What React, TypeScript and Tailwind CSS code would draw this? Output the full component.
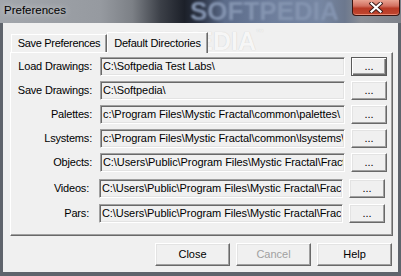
import React from "react";

type Row = {
  label: string;
  value: string;
  mt: number;
  lw: number;
  gap: number;
  tw: number;
  focused?: boolean;
};

const rows: Row[] = [
  { label: "Load Drawings:", value: "C:\\Softpedia Test Labs\\", mt: 0, lw: 81, gap: 8, tw: 245, focused: true },
  { label: "Save Drawings:", value: "C:\\Softpedia\\", mt: 5, lw: 81, gap: 8, tw: 245 },
  { label: "Palettes:", value: "c:\\Program Files\\Mystic Fractal\\common\\palettes\\", mt: 5, lw: 81, gap: 8, tw: 245 },
  { label: "Lsystems:", value: "c:\\Program Files\\Mystic Fractal\\common\\lsystems\\", mt: 5, lw: 81, gap: 8, tw: 245 },
  { label: "Objects:", value: "C:\\Users\\Public\\Program Files\\Mystic Fractal\\Fractal Objects\\", mt: 5, lw: 81, gap: 8, tw: 245 },
  { label: "Videos:", value: "C:\\Users\\Public\\Program Files\\Mystic Fractal\\Fractal Videos\\", mt: 7, lw: 78, gap: 10, tw: 244 },
  { label: "Pars:", value: "C:\\Users\\Public\\Program Files\\Mystic Fractal\\Fractal Pars\\", mt: 6, lw: 78, gap: 10, tw: 244 },
];

function SmallButton({ focused }: { focused?: boolean }) {
  return (
    <div
      className={
        focused
          ? "w-[36px] h-[19px] border border-[#5a5a5a] shadow-[inset_1px_1px_0_#ffffff,inset_-1px_-1px_0_#696969,inset_-2px_-2px_0_#a0a0a0] flex items-center justify-center text-[11px] leading-none pb-[1px]"
          : "w-[36px] h-[19px] border border-t-white border-l-white border-r-[#696969] border-b-[#696969] shadow-[inset_-1px_-1px_0_#a0a0a0,inset_1px_1px_0_#e3e3e3] flex items-center justify-center text-[11px] leading-none pb-[1px]"
      }
    >
      ...
    </div>
  );
}

function BigButton({ label, disabled }: { label: string; disabled?: boolean }) {
  return (
    <div
      className={
        "w-[75px] h-[23px] border border-t-white border-l-white border-r-[#696969] border-b-[#696969] shadow-[inset_-1px_-1px_0_#a0a0a0,inset_1px_1px_0_#e3e3e3] flex items-center justify-center text-[11px] " +
        (disabled ? "text-[#a0a0a0]" : "text-black")
      }
    >
      {label}
    </div>
  );
}

export default function App() {
  return (
    <div className="w-[401px] h-[276px] flex flex-col bg-[#5f646c] overflow-hidden font-['Liberation_Sans',Arial,sans-serif] text-black">
      {/* Title bar */}
      <div className="relative h-[23px] shrink-0 overflow-hidden bg-[linear-gradient(90deg,#a2a6ac_0%,#969aa0_25%,#7c8086_33%,#3c4048_40%,#1c2029_46%,#2c3446_50%,#5c6c8a_56%,#6e7e9c_68%,#7686a2_80%,#6c788e_86%,#8a8e96_90%,#7e828a_100%)] flex items-center">
        <div className="absolute left-[190px] top-[-2px] text-[26px] font-bold leading-none text-[#8494b0] blur-[1.2px] select-none">
          SOFTPEDIA
        </div>
        <div className="relative pl-[4px] pb-[2px] text-[11.5px] text-black [text-shadow:0_0_6px_rgba(255,255,255,0.7)]">
          Preferences
        </div>
        <div className="absolute right-[1px] top-0 w-[48px] h-[16px] rounded-b-[4px] border border-t-0 border-[#3a1410] bg-[linear-gradient(180deg,#e9a392_0%,#d27060_40%,#b83a26_55%,#c0462e_100%)] shadow-[inset_0_-1px_0_rgba(255,180,160,0.6)] flex items-center justify-center">
          <svg width="14" height="11" viewBox="0 0 14 11">
            <path d="M2.5 1.5 L11.5 9.5 M11.5 1.5 L2.5 9.5" stroke="#3a1a18" strokeWidth="4" strokeLinecap="square" />
            <path d="M2.5 1.5 L11.5 9.5 M11.5 1.5 L2.5 9.5" stroke="#ffffff" strokeWidth="2.2" strokeLinecap="square" />
          </svg>
        </div>
      </div>

      {/* Client area */}
      <div className="relative mx-[3px] mb-[4px] flex-1 bg-[#f0f0f0] flex flex-col pl-[7px] pr-[5px] pt-[9px]">
        {/* faint watermark */}
        <div className="absolute left-[110px] top-[6px] text-[25px] font-bold leading-none text-[#f6f6f6] [text-shadow:0_0_1px_#c8c8c8] pointer-events-none select-none">
          SOFTPEDIA<span className="text-[8px] align-top">™</span>
        </div>

        {/* Tabs */}
        <div className="relative flex items-end h-[20px] pl-[1px] z-10">
          <div className="w-[96px] h-[18px] border-t border-l border-t-white border-l-white border-r border-r-[#696969] shadow-[inset_-1px_0_0_#a0a0a0] flex items-center justify-center text-[11px] tracking-[-0.3px] pb-[1px]">
            Save Preferences
          </div>
          <div className="relative w-[101px] h-[21px] mb-[-1px] bg-[#f0f0f0] border-t border-l border-t-white border-l-white border-r border-r-[#696969] shadow-[inset_-1px_0_0_#a0a0a0] flex items-start justify-center pt-[2px] text-[11px] tracking-[-0.2px]">
            Default Directories
          </div>
        </div>

        {/* Panel */}
        <div className="h-[184px] border border-t-white border-l-white border-r-[#696969] border-b-[#696969] shadow-[inset_-1px_-1px_0_#a0a0a0] pt-[4px] flex flex-col">
          {rows.map((r) => (
            <div key={r.label} className="flex items-center h-[19px]" style={{ marginTop: r.mt }}>
              <div
                className="text-right text-[11px] tracking-[-0.2px] whitespace-nowrap shrink-0"
                style={{ width: r.lw, marginRight: r.gap }}
              >
                {r.label}
              </div>
              <div
                className="h-[19px] shrink-0 bg-[#f0f0f0] border border-t-[#a0a0a0] border-l-[#a0a0a0] border-r-white border-b-white shadow-[inset_1px_1px_0_#696969,inset_-1px_-1px_0_#e3e3e3] pl-[2px] pr-[1px]"
                style={{ width: r.tw }}
              >
                <div className="w-full overflow-hidden whitespace-nowrap text-[11px] leading-[17px] tracking-[-0.08px]">
                  {r.value}
                </div>
              </div>
              <div className="ml-[6px] shrink-0">
                <SmallButton focused={r.focused} />
              </div>
            </div>
          ))}
        </div>

        {/* Bottom buttons */}
        <div className="flex justify-end gap-[6px] mt-[7px] pr-[1px]">
          <BigButton label="Close" />
          <BigButton label="Cancel" disabled />
          <BigButton label="Help" />
        </div>
      </div>
    </div>
  );
}
